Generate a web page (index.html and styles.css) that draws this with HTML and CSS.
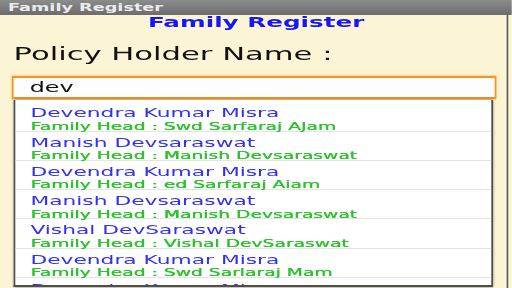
FILE: index.html
```html
<!DOCTYPE html>
<html>

<head>
    <meta charset="utf-8">
    <title>Family Register</title>
    <link rel="stylesheet" href="styles.css">
</head>

<body>
    <div class="screen">
        <div class="titlebar">Family Register</div>

        <div class="content">
            <h1 class="heading">Family Register</h1>
            <div class="label">Policy Holder Name :</div>

            <!-- search box with its suggestion list -->
            <div class="search">
                <div class="search-input">dev</div>
                <ul class="suggestions">
                    <li>
                        <span class="name">Devendra Kumar Misra</span>
                        <span class="head">Family Head : Swd Sarfaraj AJam</span>
                    </li>
                    <li>
                        <span class="name">Manish Devsaraswat</span>
                        <span class="head">Family Head : Manish Devsaraswat</span>
                    </li>
                    <li>
                        <span class="name">Devendra Kumar Misra</span>
                        <span class="head">Family Head : ed Sarfaraj Aiam</span>
                    </li>
                    <li>
                        <span class="name">Manish Devsaraswat</span>
                        <span class="head">Family Head : Manish Devsaraswat</span>
                    </li>
                    <li>
                        <span class="name">Vishal DevSaraswat</span>
                        <span class="head">Family Head : Vishal DevSaraswat</span>
                    </li>
                    <li>
                        <span class="name">Devendra Kumar Misra</span>
                        <span class="head">Family Head : Swd Sarlaraj Mam</span>
                    </li>
                    <li>
                        <span class="name">Devendra Kumar Misra</span>
                        <span class="head">Family Head : Swd Sarfaraj AJam</span>
                    </li>
                </ul>
            </div>
        </div>
    </div>
</body>

</html>
```

FILE: styles.css
```css
/* phone screen, stretched sideways like the capture */
body {
    margin: 0;
    padding: 0;
    background-color: #fbf5d6;
    font-family: "DejaVu Sans", Verdana, sans-serif;
    overflow: hidden;
}

.screen {
    width: 301.2px;
    height: 288px;
    display: flex;
    flex-direction: column;
    transform: scaleX(1.7);
    transform-origin: 0 0;
}

.titlebar {
    height: 15px;
    flex: none;
    padding-left: 4.7px;
    background: linear-gradient(#8c8c8c, #6c6c6c);
    color: #ececec;
    font-weight: bold;
    font-size: 10.4px;
    line-height: 15px;
}

.content {
    flex: 1;
    margin-right: 1.8px;
    padding-left: 7px;
    padding-right: 4px;
    border-right: 1.4px solid #5c5c5c;
    overflow: hidden;
}

.heading {
    margin: 0;
    text-align: center;
    color: #1616f8;
    font-size: 14.5px;
    line-height: 15px;
    font-weight: bold;
}

.label {
    margin-top: 13px;
    padding-left: 1px;
    color: #111;
    font-size: 18px;
    line-height: 22px;
}

.search {
    margin-top: 11px;
}

.search-input {
    width: 285.3px;
    height: 23px;
    box-sizing: border-box;
    padding-left: 9.5px;
    background-color: #fdfdfd;
    border: 1.3px solid #f59420;
    border-width: 2px 1.3px;
    box-shadow: 0 0 2px rgba(245, 148, 32, 0.7);
    color: #111;
    font-size: 14px;
    line-height: 19px;
}

.suggestions {
    list-style-type: none;
    margin: 1px 0 0 1.1px;
    padding: 0;
    width: 282.4px;
    height: 187px;
    box-sizing: border-box;
    overflow: hidden;
    background-color: #fff;
    border: 1.2px solid #4e4e4e;
    border-top: none;
    border-bottom-width: 2px;
    box-shadow: 0 0 2px rgba(0, 0, 0, 0.5);
}

.suggestions li {
    height: 29.3px;
    box-sizing: border-box;
    padding: 4px 0 0 8.8px;
    border-bottom: 1px solid #e4e4e4;
    display: flex;
    flex-direction: column;
}

.suggestions li:first-child {
    height: 31.5px;
    padding-top: 6px;
}

.name {
    color: #3030f0;
    font-size: 12.8px;
    line-height: 13px;
}

.head {
    margin-top: 1.5px;
    color: #2ec22e;
    font-size: 11px;
    line-height: 11px;
    text-shadow: 0.3px 0 0 #2ec22e;
}
```
